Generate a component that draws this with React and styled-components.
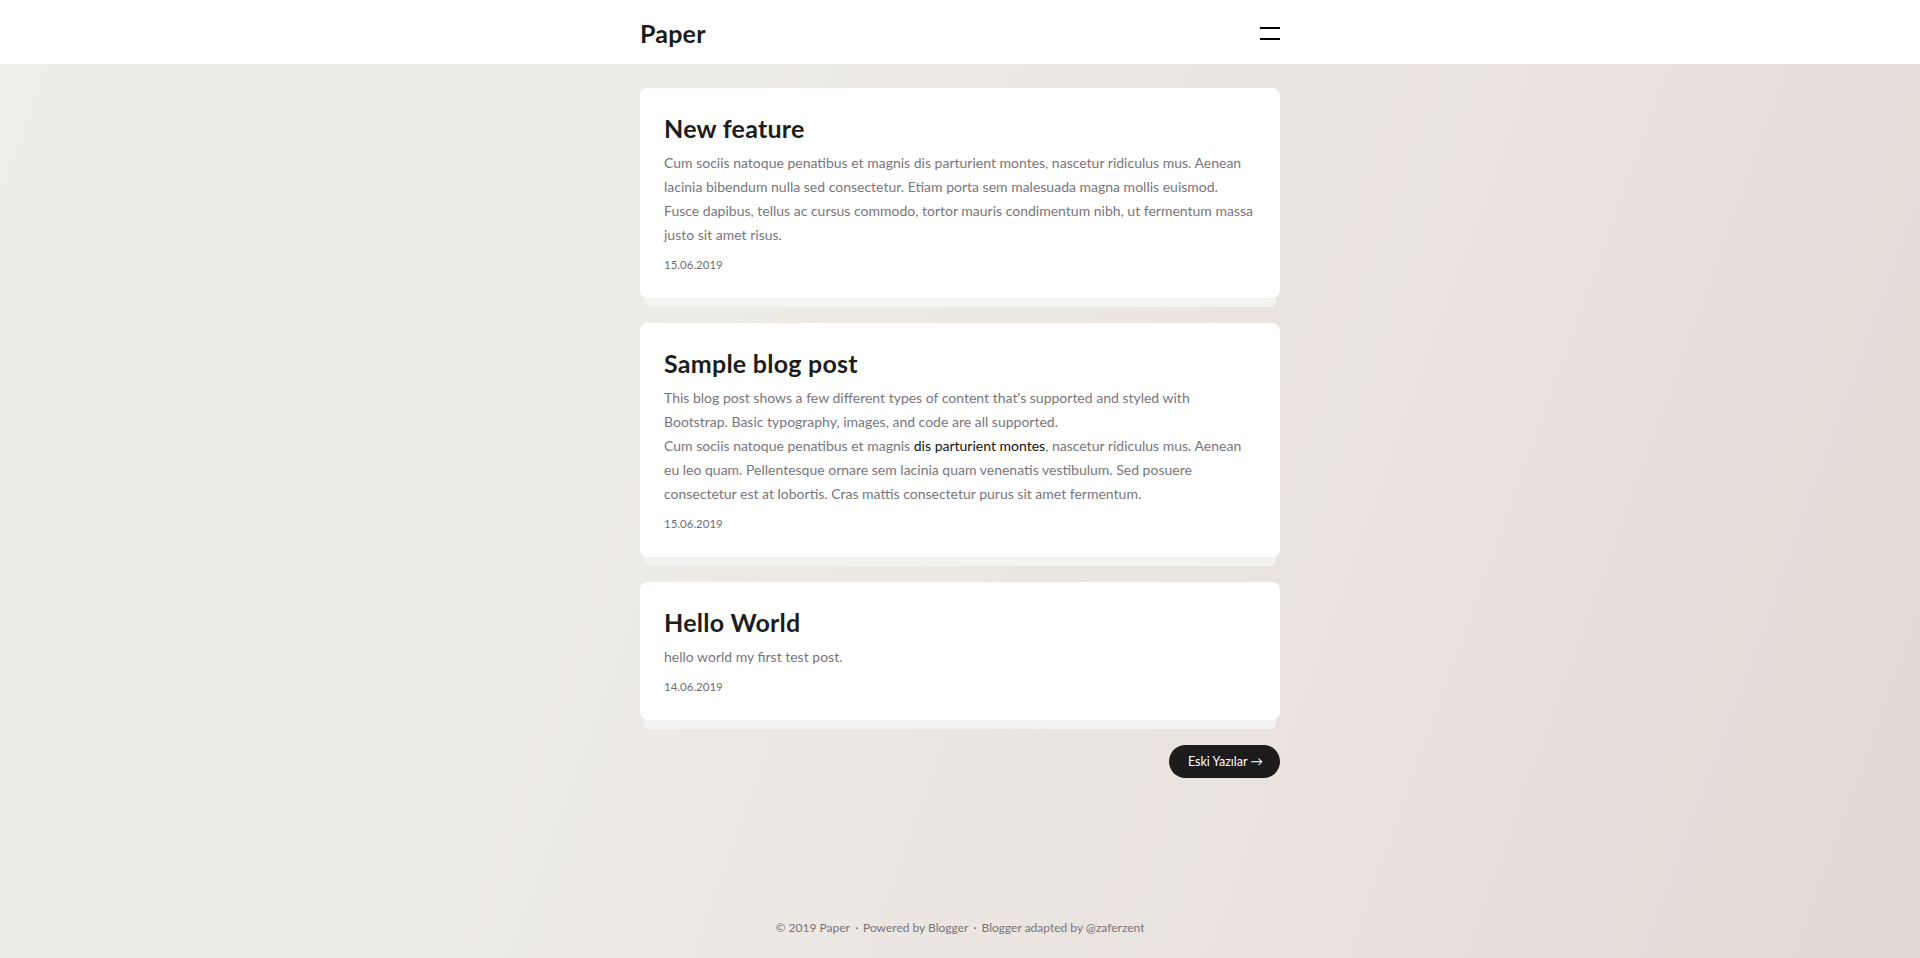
import React from "react";
import styled, { createGlobalStyle } from "styled-components";

const Global = createGlobalStyle`
  * { box-sizing: border-box; }
  html, body { margin: 0; padding: 0; }
  body {
    font-family: Lato, "Open Sans", sans-serif;
    color: #1e1e1e;
  }
`;

const Page = styled.div`
  min-height: 100vh;
  display: flex;
  flex-direction: column;
  background: linear-gradient(110deg, #efeeea 0%, #eeece8 35%, #e9e2de 70%, #e2d8d4 100%);
`;

const Header = styled.header`
  height: 64px;
  background: #ffffff;
  display: flex;
  justify-content: center;
`;

const HeaderInner = styled.div`
  width: 640px;
  display: flex;
  align-items: center;
  justify-content: space-between;
`;

const Brand = styled.a`
  font-size: 25px;
  font-weight: 700;
  color: #1b1b1b;
  text-decoration: none;
  letter-spacing: 0.2px;
  margin-top: 2px;
`;

const MenuButton = styled.button`
  width: 20px;
  height: 13px;
  padding: 0;
  border: 0;
  background: transparent;
  display: flex;
  flex-direction: column;
  justify-content: space-between;
  cursor: pointer;
  margin-top: 2px;
`;

const MenuLine = styled.span`
  display: block;
  height: 2px;
  width: 100%;
  background: #000;
`;

const Main = styled.main`
  width: 640px;
  margin: 24px auto 0;
  display: flex;
  flex-direction: column;
  gap: 25px;
  isolation: isolate;
`;

const Card = styled.article`
  position: relative;
  background: #ffffff;
  border-radius: 8px;
  padding: 26px 24px 25px;
  &::after {
    content: "";
    position: absolute;
    left: 4px;
    right: 4px;
    bottom: -9px;
    height: 20px;
    background: #f3f3f1;
    border-radius: 0 0 6px 6px;
    z-index: -1;
  }
`;

const Title = styled.h2`
  margin: 0 0 8px;
  font-size: 25px;
  line-height: 29px;
  font-weight: 700;
  letter-spacing: 0.25px;
  color: #1d1d1d;
`;

const Body = styled.p`
  margin: 0 0 10px;
  font-size: 14px;
  line-height: 24px;
  font-weight: 400;
  color: #78767d;
`;

const Link = styled.a`
  color: #111;
  text-decoration: none;
`;

const DateText = styled.div`
  font-size: 11.5px;
  line-height: 16px;
  color: #6e6e74;
`;

const Pager = styled.div`
  display: flex;
  justify-content: flex-end;
`;

const OlderButton = styled.a`
  height: 33px;
  padding: 0 17px 0 19px;
  border-radius: 17px;
  background: #1d1b1c;
  color: #fff;
  font-size: 12.5px;
  display: inline-flex;
  align-items: center;
  text-decoration: none;
`;

const Footer = styled.footer`
  margin-top: auto;
  padding: 0 0 22px;
  text-align: center;
  font-size: 12px;
  line-height: 16px;
  color: #7a7378;
`;

const Sep = styled.span`
  margin: 0 5px;
`;

const posts = [
  {
    title: "New feature",
    body: [
      "Cum sociis natoque penatibus et magnis dis parturient montes, nascetur ridiculus mus. Aenean lacinia bibendum nulla sed consectetur. Etiam porta sem malesuada magna mollis euismod. Fusce dapibus, tellus ac cursus commodo, tortor mauris condimentum nibh, ut fermentum massa justo sit amet risus.",
    ],
    date: "15.06.2019",
  },
  {
    title: "Sample blog post",
    body: "sample",
    date: "15.06.2019",
  },
  {
    title: "Hello World",
    body: ["hello world my first test post."],
    date: "14.06.2019",
  },
];

function PostBody({ post }) {
  if (post.body === "sample") {
    return (
      <Body>
        This blog post shows a few different types of content that's supported and styled with Bootstrap. Basic typography, images, and code are all supported.
        <br />
        Cum sociis natoque penatibus et magnis <Link href="#">dis parturient montes</Link>, nascetur ridiculus mus. Aenean eu leo quam. Pellentesque ornare sem lacinia quam venenatis vestibulum. Sed posuere consectetur est at lobortis. Cras mattis consectetur purus sit amet fermentum.
      </Body>
    );
  }
  return <Body>{post.body[0]}</Body>;
}

export default function App() {
  return (
    <>
      <Global />
      <Page>
        <Header>
          <HeaderInner>
            <Brand href="#">Paper</Brand>
            <MenuButton aria-label="menu">
              <MenuLine />
              <MenuLine />
            </MenuButton>
          </HeaderInner>
        </Header>
        <Main>
          {posts.map((p) => (
            <Card key={p.title}>
              <Title>{p.title}</Title>
              <PostBody post={p} />
              <DateText>{p.date}</DateText>
            </Card>
          ))}
          <Pager>
            <OlderButton href="#">Eski Yazılar →</OlderButton>
          </Pager>
        </Main>
        <Footer>
          © 2019 Paper<Sep>·</Sep>Powered by Blogger<Sep>·</Sep>Blogger adapted by @zaferzent
        </Footer>
      </Page>
    </>
  );
}
